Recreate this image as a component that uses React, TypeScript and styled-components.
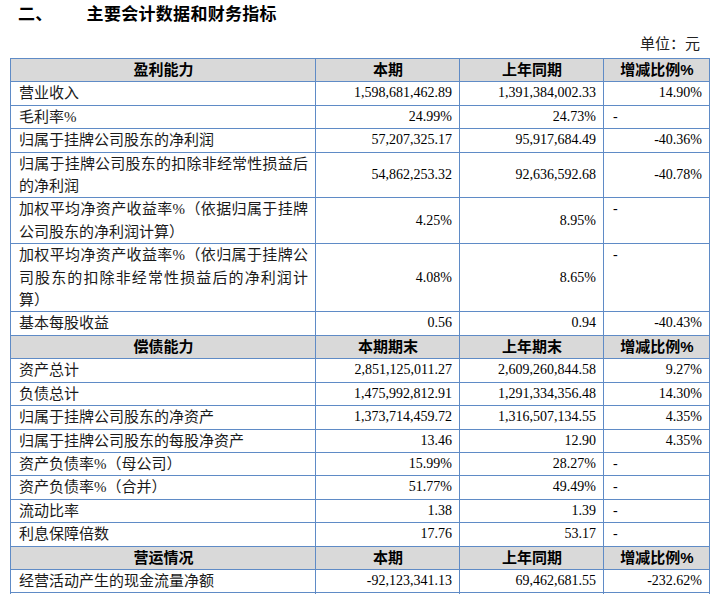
import React from "react";
import styled, { createGlobalStyle } from "styled-components";

const GlobalStyle = createGlobalStyle`
  html, body {
    margin: 0;
    padding: 0;
    background: #ffffff;
  }
`;

type Row = {
  label: string;
  current: string;
  previous: string;
  change: string;
};

type Section = {
  title: string;
  heads: [string, string, string];
  rows: Row[];
};

const sections: Section[] = [
  {
    title: "盈利能力",
    heads: ["本期", "上年同期", "增减比例%"],
    rows: [
      { label: "营业收入", current: "1,598,681,462.89", previous: "1,391,384,002.33", change: "14.90%" },
      { label: "毛利率%", current: "24.99%", previous: "24.73%", change: "-" },
      { label: "归属于挂牌公司股东的净利润", current: "57,207,325.17", previous: "95,917,684.49", change: "-40.36%" },
      {
        label: "归属于挂牌公司股东的扣除非经常性损益后的净利润",
        current: "54,862,253.32",
        previous: "92,636,592.68",
        change: "-40.78%",
      },
      {
        label: "加权平均净资产收益率%（依据归属于挂牌公司股东的净利润计算）",
        current: "4.25%",
        previous: "8.95%",
        change: "-",
      },
      {
        label: "加权平均净资产收益率%（依归属于挂牌公司股东的扣除非经常性损益后的净利润计算）",
        current: "4.08%",
        previous: "8.65%",
        change: "-",
      },
      { label: "基本每股收益", current: "0.56", previous: "0.94", change: "-40.43%" },
    ],
  },
  {
    title: "偿债能力",
    heads: ["本期期末", "上年期末", "增减比例%"],
    rows: [
      { label: "资产总计", current: "2,851,125,011.27", previous: "2,609,260,844.58", change: "9.27%" },
      { label: "负债总计", current: "1,475,992,812.91", previous: "1,291,334,356.48", change: "14.30%" },
      { label: "归属于挂牌公司股东的净资产", current: "1,373,714,459.72", previous: "1,316,507,134.55", change: "4.35%" },
      { label: "归属于挂牌公司股东的每股净资产", current: "13.46", previous: "12.90", change: "4.35%" },
      { label: "资产负债率%（母公司）", current: "15.99%", previous: "28.27%", change: "-" },
      { label: "资产负债率%（合并）", current: "51.77%", previous: "49.49%", change: "-" },
      { label: "流动比率", current: "1.38", previous: "1.39", change: "-" },
      { label: "利息保障倍数", current: "17.76", previous: "53.17", change: "-" },
    ],
  },
  {
    title: "营运情况",
    heads: ["本期", "上年同期", "增减比例%"],
    rows: [
      { label: "经营活动产生的现金流量净额", current: "-92,123,341.13", previous: "69,462,681.55", change: "-232.62%" },
      // the next row only peeks in at the bottom edge
      { label: "", current: "", previous: "", change: "" },
    ],
  },
];

const App = () => {
  return (
    <>
      <GlobalStyle />
      <Page>
        <Title>
          <span>二、</span>
          <TitleText>主要会计数据和财务指标</TitleText>
        </Title>
        <Unit>单位：元</Unit>
        <Table>
          <colgroup>
            <col style={{ width: 305 }} />
            <col style={{ width: 144 }} />
            <col style={{ width: 144 }} />
            <col style={{ width: 106 }} />
          </colgroup>
          <tbody>
            {sections.map((section) => (
              <React.Fragment key={section.title}>
                <tr>
                  <HeadCell>{section.title}</HeadCell>
                  {section.heads.map((h) => (
                    <HeadCell key={h}>{h}</HeadCell>
                  ))}
                </tr>
                {section.rows.map((row, i) => (
                  <tr key={row.label || i}>
                    <LabelCell>{row.label || "\u00a0"}</LabelCell>
                    <NumberCell>{row.current}</NumberCell>
                    <NumberCell>{row.previous}</NumberCell>
                    {row.change === "-" ? (
                      <DashCell>-</DashCell>
                    ) : (
                      <NumberCell>{row.change}</NumberCell>
                    )}
                  </tr>
                ))}
              </React.Fragment>
            ))}
          </tbody>
        </Table>
      </Page>
    </>
  );
};

const Page = styled.div`
  width: 699px;
  padding: 0 6px 0 10px;
  color: #000;
`;

const Title = styled.h2`
  margin: 0;
  padding: 3px 0 0 8px;
  height: 20px;
  line-height: 20px;
  font-family: "Noto Sans CJK SC", sans-serif;
  font-size: 17px;
  font-weight: 700;
  letter-spacing: 0.3px;
  display: flex;
`;

const TitleText = styled.span`
  margin-left: 34px;
`;

const Unit = styled.div`
  margin-top: 10px;
  padding-right: 9px;
  text-align: right;
  line-height: 20px;
  font-family: "Noto Sans CJK SC", sans-serif;
  font-size: 15px;
  color: #222;
`;

const Table = styled.table`
  margin-top: 5px;
  width: 699px;
  table-layout: fixed;
  border-collapse: collapse;
  font-family: "Liberation Serif", "Noto Sans CJK SC", serif;
`;

const Cell = styled.td`
  border: 1px solid #5f8bc6;
  padding: 0 7px 0 8px;
  line-height: 22.4px;
  vertical-align: middle;
`;

const HeadCell = styled(Cell)`
  background: #d9d9d9;
  text-align: center;
  font-family: "Liberation Sans", "Noto Sans CJK SC", sans-serif;
  font-size: 15px;
  font-weight: 700;
`;

const LabelCell = styled(Cell)`
  text-align: justify;
  font-size: 15px;
  color: #1a1a1a;
`;

const NumberCell = styled(Cell)`
  text-align: right;
  font-size: 14px;
`;

const DashCell = styled(Cell)`
  text-align: left;
  vertical-align: top;
  padding-left: 9px;
  font-size: 14px;
`;

export default App;
